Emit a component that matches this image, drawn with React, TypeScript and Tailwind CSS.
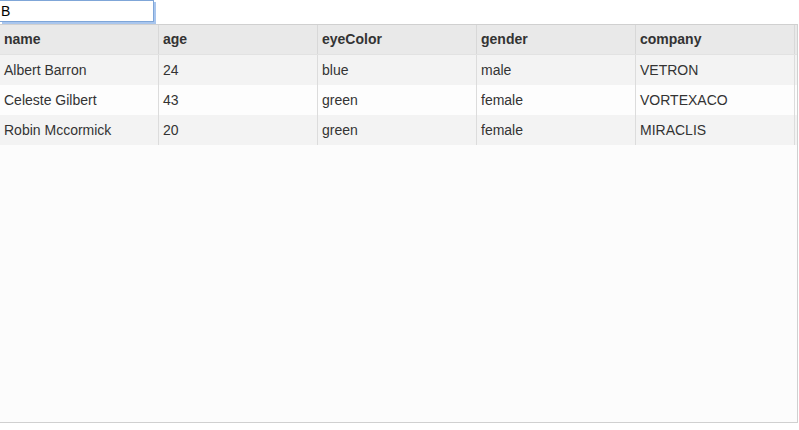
import { useState } from "react";

interface Person {
  name: string;
  age: number;
  eyeColor: string;
  gender: string;
  company: string;
}

const people: Person[] = [
  { name: "Albert Barron", age: 24, eyeColor: "blue", gender: "male", company: "VETRON" },
  { name: "Celeste Gilbert", age: 43, eyeColor: "green", gender: "female", company: "VORTEXACO" },
  { name: "Robin Mccormick", age: 20, eyeColor: "green", gender: "female", company: "MIRACLIS" },
];

const columns: (keyof Person)[] = ["name", "age", "eyeColor", "gender", "company"];

export default function App() {
  const [filter, setFilter] = useState("B");

  return (
    <div className="w-[799px] h-[430px] bg-white text-[14px] text-[#333] font-['Liberation_Sans',Arial,sans-serif]">
      <input
        type="text"
        value={filter}
        onChange={(e) => setFilter(e.target.value)}
        className="block w-[154px] h-[22px] pl-[1px] border border-l-0 border-[#7fa6d8] shadow-[2px_2px_0_0_#a9c6ee,0_-1px_0_0_#c3d6f0] text-[14px] text-black bg-white outline-none"
      />
      <div className="mt-[2px] w-[798px] h-[399px] border-t border-r border-b border-[#d0d0d0] bg-[#fcfcfc] overflow-hidden">
        <div className="flex h-[30px] bg-[#e9e9e9] border-b border-[#e2e2e2]">
          {columns.map((c) => (
            <div key={c} className="w-[159px] shrink-0 border-r border-[#d8d8d8] pl-[4px] flex items-center font-bold">
              {c}
            </div>
          ))}
        </div>
        {people.map((p, i) => (
          <div key={p.name} className={`flex h-[30px] ${i % 2 === 0 ? "bg-[#f3f3f3]" : "bg-[#fdfdfd]"}`}>
            {columns.map((c) => (
              <div key={c} className="w-[159px] shrink-0 border-r border-[#dcdcdc] pl-[4px] flex items-center">
                {p[c]}
              </div>
            ))}
          </div>
        ))}
      </div>
    </div>
  );
}
